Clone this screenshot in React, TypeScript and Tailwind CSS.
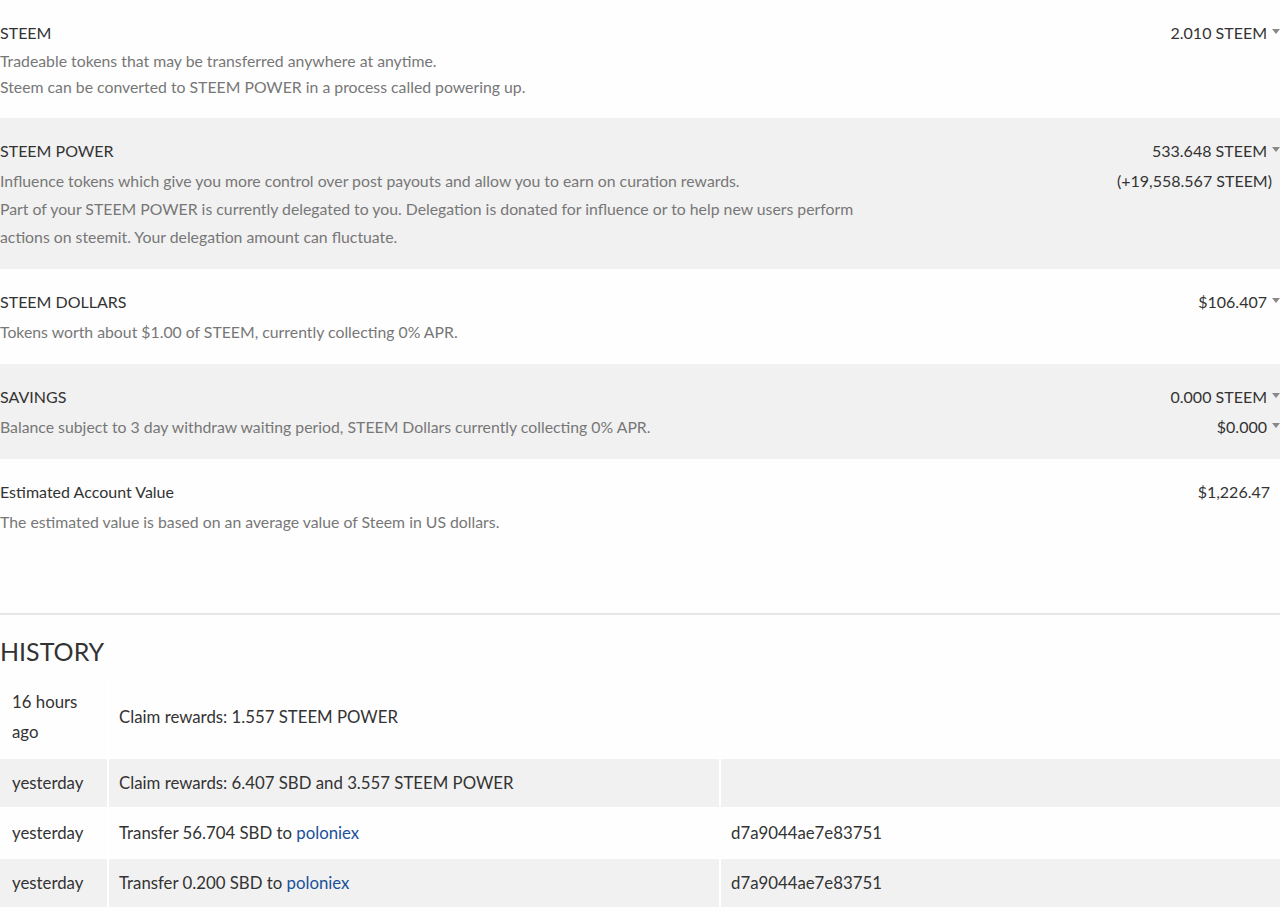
import React from 'react';

const FONT = { fontFamily: 'Lato, "Open Sans", "Liberation Sans", sans-serif' };

// little grey dropdown triangle shown next to wallet amounts
function Caret() {
  return (
    <span className="ml-[5px] inline-block h-0 w-0 translate-y-[-3px] border-x-[4px] border-t-[5px] border-x-transparent border-t-[#888] align-middle" />
  );
}

type Balance = {
  title: string;
  desc: string[];
  values: { text: string; caret?: boolean; pad?: string }[];
  gray?: boolean;
  tight?: boolean;
};

const BALANCES: Balance[] = [
  {
    title: 'STEEM',
    desc: [
      'Tradeable tokens that may be transferred anywhere at anytime.',
      'Steem can be converted to STEEM POWER in a process called powering up.',
    ],
    values: [{ text: '2.010 STEEM', caret: true }],
    tight: true,
  },
  {
    title: 'STEEM POWER',
    desc: [
      'Influence tokens which give you more control over post payouts and allow you to earn on curation rewards.',
      'Part of your STEEM POWER is currently delegated to you. Delegation is donated for influence or to help new users perform actions on steemit. Your delegation amount can fluctuate.',
    ],
    values: [
      { text: '533.648 STEEM', caret: true },
      { text: '(+19,558.567 STEEM)', pad: 'pr-[8px]' },
    ],
    gray: true,
  },
  {
    title: 'STEEM DOLLARS',
    desc: ['Tokens worth about $1.00 of STEEM, currently collecting 0% APR.'],
    values: [{ text: '$106.407', caret: true }],
  },
  {
    title: 'SAVINGS',
    desc: ['Balance subject to 3 day withdraw waiting period, STEEM Dollars currently collecting 0% APR.'],
    values: [
      { text: '0.000 STEEM', caret: true },
      { text: '$0.000', caret: true },
    ],
    gray: true,
  },
];

const HISTORY = [
  { when: '16 hours ago', what: <>Claim rewards: 1.557 STEEM POWER</>, memo: '', tall: true },
  { when: 'yesterday', what: <>Claim rewards: 6.407 SBD and 3.557 STEEM POWER</>, memo: '', gray: true },
  {
    when: 'yesterday',
    what: (
      <>
        Transfer 56.704 SBD to <a className="text-[#1a5099]">poloniex</a>
      </>
    ),
    memo: 'd7a9044ae7e83751',
  },
  {
    when: 'yesterday',
    what: (
      <>
        Transfer 0.200 SBD to <a className="text-[#1a5099]">poloniex</a>
      </>
    ),
    memo: 'd7a9044ae7e83751',
    gray: true,
  },
];

function BalanceRow({ b }: { b: Balance }) {
  return (
    <div className={`flex pt-[20px] pb-[18px] ${b.gray ? 'bg-[#f1f1f1]' : ''}`}>
      <div className="w-[862px] shrink-0">
        <div className="text-[16px] leading-[26px] text-[#333]">{b.title}</div>
        <div
          className={`text-[15.8px] text-[#777] ${b.tight ? 'mt-[2px] leading-[26px]' : 'mt-[3px] leading-[28px]'}`}
        >
          {b.desc.map((d) => (
            <div key={d}>{d}</div>
          ))}
        </div>
      </div>
      <div className="flex-1 text-right text-[16px] text-[#333]">
        {b.values.map((v, i) => (
          <div key={v.text} className={`${i === 0 ? 'leading-[26px]' : 'mt-[3px] leading-[28px]'} ${v.pad ?? ''}`}>
            {v.text}
            {v.caret && <Caret />}
          </div>
        ))}
      </div>
    </div>
  );
}

export default function App() {
  return (
    <div className="min-h-[909px] w-[1280px] overflow-hidden bg-[#fefefe]" style={FONT}>
      {BALANCES.map((b) => (
        <BalanceRow key={b.title} b={b} />
      ))}
      <div className="flex pt-[20px] pb-[77px]">
        <div className="w-[862px] shrink-0">
          <div className="text-[16px] leading-[26px] text-[#333]">Estimated Account Value</div>
          <div className="mt-[3px] text-[15.8px] leading-[28px] text-[#777]">
            The estimated value is based on an average value of Steem in US dollars.
          </div>
        </div>
        <div className="flex-1 pr-[10px] text-right text-[16px] leading-[26px] text-[#333]">$1,226.47</div>
      </div>

      <div className="border-t-2 border-[#e6e6e6]" />

      <h2 className="mt-[18px] text-[25px] leading-[36px] text-[#333]">HISTORY</h2>

      <div className="mt-[8px] text-[16.8px] leading-[30px] text-[#333]">
        {HISTORY.map((h, i) => (
          <div
            key={i}
            className={`grid grid-cols-[109px_612px_1fr] border-b-2 border-white ${h.gray ? 'bg-[#f1f1f1]' : ''}`}
          >
            <div className={`flex items-center border-r-2 border-white px-[12px] ${h.tall ? 'py-[10px]' : 'py-[9px]'}`}>
              {h.when}
            </div>
            <div className="flex items-center border-r-2 border-white px-[10px] py-[9px]">
              <span>{h.what}</span>
            </div>
            <div className="flex items-center px-[10px] py-[9px]">{h.memo}</div>
          </div>
        ))}
      </div>
    </div>
  );
}
